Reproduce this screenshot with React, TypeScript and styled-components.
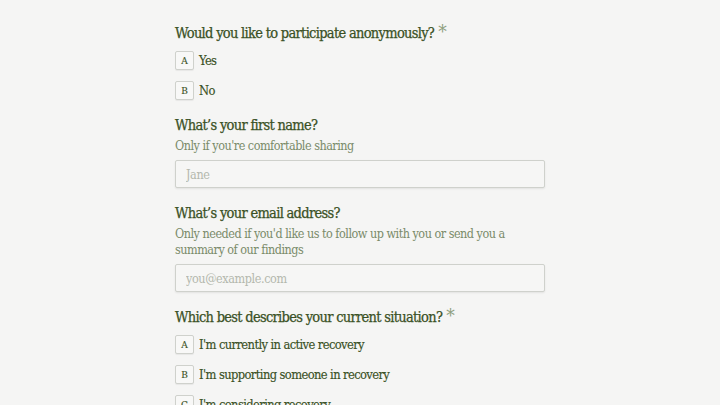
import styled, { createGlobalStyle } from 'styled-components';

const GlobalStyle = createGlobalStyle`
  html, body {
    margin: 0;
    padding: 0;
    background: #f5f5f4;
  }
  body {
    font-family: 'DejaVu Serif', serif;
    font-stretch: condensed;
  }
`;

interface Question {
  title: string;
  required?: boolean;
  help?: string;
  placeholder?: string;
  options?: string[];
}

const questions: Question[] = [
  { title: 'Would you like to participate anonymously?', required: true, options: ['Yes', 'No'] },
  { title: 'What’s your first name?', help: "Only if you're comfortable sharing", placeholder: 'Jane' },
  {
    title: 'What’s your email address?',
    help: "Only needed if you'd like us to follow up with you or send you a summary of our findings",
    placeholder: 'you@example.com',
  },
  {
    title: 'Which best describes your current situation?',
    required: true,
    options: ["I'm currently in active recovery", "I'm supporting someone in recovery", "I'm considering recovery"],
  },
];

const letters = 'ABCDEFGH';

const App = () => {
  return (
    <>
      <GlobalStyle />
      <Page>
        <Form>
          {questions.map((q) => (
            <Field key={q.title}>
              <Title>
                {q.title}
                {q.required && <Star>*</Star>}
              </Title>
              {q.help && <Help>{q.help}</Help>}
              {q.placeholder && <Input placeholder={q.placeholder} />}
              {q.options && (
                <Options>
                  {q.options.map((opt, i) => (
                    <Option key={opt}>
                      <Key>{letters[i]}</Key>
                      <span>{opt}</span>
                    </Option>
                  ))}
                </Options>
              )}
            </Field>
          ))}
        </Form>
      </Page>
    </>
  );
};
export default App;

const Page = styled.div`
  height: 405px;
  overflow: hidden;
  display: flex;
  justify-content: center;
`;

const Form = styled.div`
  width: 370px;
  padding-top: 22px;
  display: flex;
  flex-direction: column;
  gap: 14px;
`;

const Field = styled.div`
  display: flex;
  flex-direction: column;
`;

const Title = styled.h2`
  margin: 0;
  font-size: 14.5px;
  font-weight: normal;
  line-height: 22px;
  letter-spacing: -0.7px;
  color: #3a5125;
  -webkit-text-stroke: 0.25px #3a5125;
  white-space: nowrap;
`;

const Star = styled.span`
  color: #8fa07f;
  -webkit-text-stroke: 0;
  font-size: 19px;
  margin-left: 4px;
  vertical-align: top;
  line-height: 18px;
`;

const Help = styled.p`
  margin: 2px 0 0;
  font-size: 12.5px;
  line-height: 16px;
  letter-spacing: -0.5px;
  color: #7a8b6a;
`;

const Input = styled.input`
  margin-top: 6px;
  box-sizing: border-box;
  width: 100%;
  height: 28px;
  padding: 0 10px;
  border: 1px solid #cfd1cc;
  border-radius: 2px;
  background: #f6f6f5;
  box-shadow: 0 1px 2px rgba(0, 0, 0, 0.08);
  font-family: 'DejaVu Serif', serif;
  font-stretch: condensed;
  font-size: 12.5px;
  letter-spacing: -0.4px;
  color: #3a5125;
  outline: none;

  &::placeholder {
    color: #b4b8ad;
  }
`;

const Options = styled.div`
  margin-top: 7px;
  display: flex;
  flex-direction: column;
  gap: 11px;
`;

const Option = styled.div`
  display: flex;
  align-items: center;
  gap: 5px;
  font-size: 12.8px;
  letter-spacing: -0.6px;
  color: #3a5125;
  -webkit-text-stroke: 0.15px #3a5125;
`;

const Key = styled.span`
  box-sizing: border-box;
  width: 19px;
  height: 19px;
  flex-shrink: 0;
  display: flex;
  align-items: center;
  justify-content: center;
  border: 1px solid #cfd1cc;
  border-radius: 2px;
  background: #f8f8f7;
  box-shadow: 0 1px 1px rgba(0, 0, 0, 0.06);
  font-size: 10px;
  letter-spacing: 0;
  color: #3a5125;
`;
